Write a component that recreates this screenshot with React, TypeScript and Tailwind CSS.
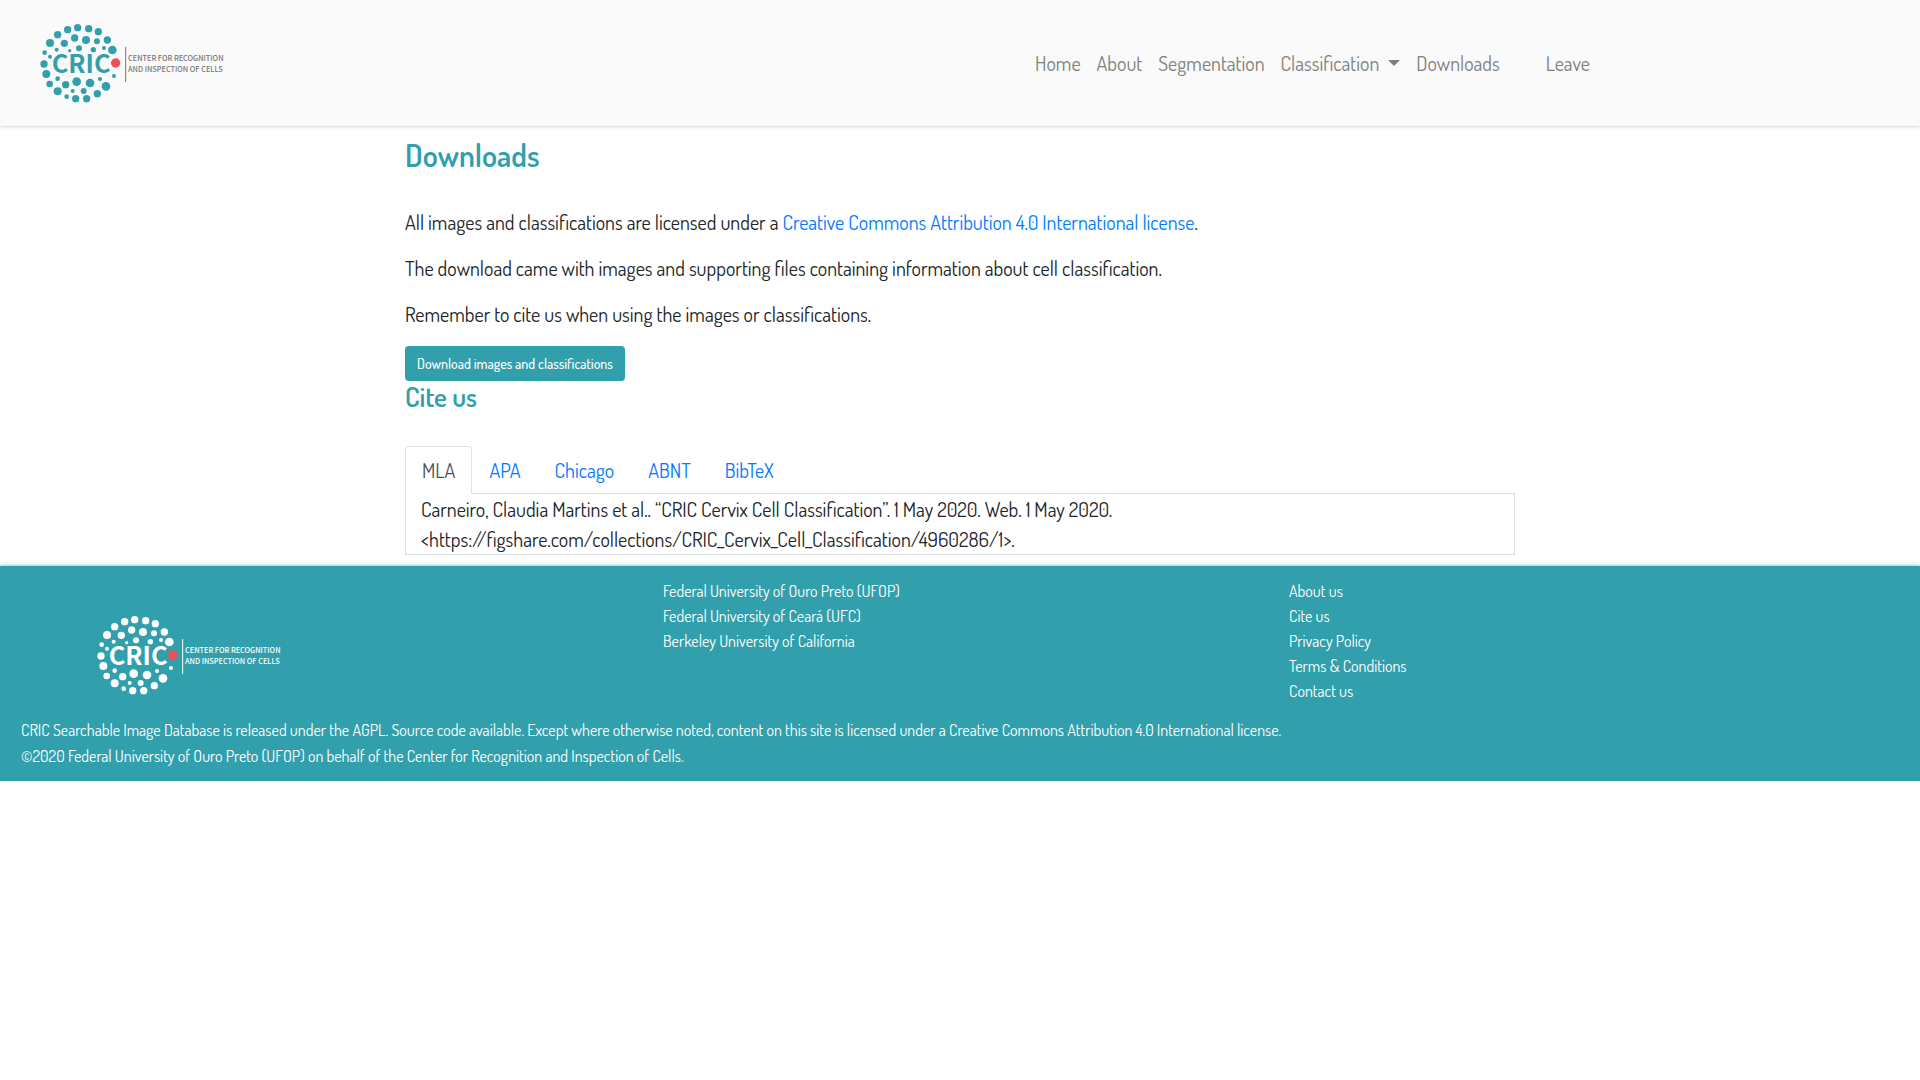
import { useState } from 'react';

// Cell dots around the wordmark: centre x, centre y, radius
const DOTS: [number, number, number][] = [
  [173, 53, 11], [206, 56, 11], [235, 65, 11], [143, 59, 11], [113, 74, 11],
  [90, 99, 12], [133, 100, 11], [164, 84, 11], [198, 90, 12], [231, 94, 9],
  [262, 90, 11], [277, 120, 13], [252, 114, 6], [220, 119, 8], [177, 115, 9],
  [149, 122, 5], [110, 119, 6], [74, 128, 7], [90, 140, 6], [72, 162, 11],
  [79, 192, 12], [89, 222, 10], [113, 206, 7], [137, 224, 11], [170, 215, 13],
  [210, 219, 13], [240, 207, 6], [282, 198, 6], [258, 229, 13], [232, 251, 11],
  [191, 243, 9], [158, 243, 6], [113, 244, 12], [140, 260, 7], [167, 266, 11],
  [200, 266, 11],
];

function Logo({ inverse = false }: { inverse?: boolean }) {
  const cells = inverse ? 'fill-white' : 'fill-[#329fac]';
  const text = inverse ? 'fill-white' : 'fill-[#777777]';
  const rule = inverse ? 'stroke-white' : 'stroke-[#777777]';
  return (
    <svg viewBox="60 39 576 240" className="h-20 w-48" role="img" aria-label="CRIC">
      <g className={cells}>
        {DOTS.map(([x, y, r]) => (
          <circle key={`${x}-${y}`} cx={x} cy={y} r={r} />
        ))}
        <text x="95" y="189" className="font-['Noto_Sans_CJK_SC',sans-serif] text-[76px] font-bold">
          CRIC
        </text>
      </g>
      <circle cx="287" cy="159" r="14" className="fill-[#f04e52]" />
      <line x1="317" x2="317" y1="111" y2="216" strokeWidth="3" className={rule} />
      <g className={`font-['Noto_Sans_CJK_SC',sans-serif] text-[22px] font-medium ${text}`}>
        <text x="324" y="154">CENTER FOR RECOGNITION</text>
        <text x="324" y="185">AND INSPECTION OF CELLS</text>
      </g>
    </svg>
  );
}

const CITATIONS = [
  {
    id: 'MLA',
    lines: [
      'Carneiro, Claudia Martins et al.. “CRIC Cervix Cell Classification”. 1 May 2020. Web. 1 May 2020.',
      '<https://figshare.com/collections/CRIC_Cervix_Cell_Classification/4960286/1>.',
    ],
  },
  { id: 'APA', lines: ['Carneiro, Claudia Martins et al. (2020). CRIC Cervix Cell Classification.'] },
  { id: 'Chicago', lines: ['Carneiro, Claudia Martins et al. “CRIC Cervix Cell Classification”. 2020.'] },
  { id: 'ABNT', lines: ['CARNEIRO, Claudia Martins et al. CRIC Cervix Cell Classification. 2020.'] },
  { id: 'BibTeX', lines: ['@misc{cric2020, title={CRIC Cervix Cell Classification}, year={2020}}'] },
];

function Header() {
  return (
    <header className="relative flex items-center justify-between bg-[#fafafa] py-[23px] pl-10 pr-[322px] shadow-[0_0_4px_rgba(0,0,0,0.25)]">
      <a href="#home">
        <Logo />
      </a>
      <nav aria-label="Main" className="flex items-center text-[#7f7f7f]">
        <a href="#home" className="px-2">Home</a>
        <a href="#about" className="px-2">About</a>
        <a href="#segmentation" className="px-2">Segmentation</a>
        <button type="button" aria-haspopup="menu" className="flex items-center gap-[9px] px-2">
          Classification
          <svg viewBox="0 0 12 6" className="h-1.5 w-3 fill-current" aria-hidden="true">
            <path d="M0 0h12L6 6z" />
          </svg>
        </button>
        <a href="#downloads" className="px-2">Downloads</a>
        <a href="#leave" className="ml-[30px] px-2">Leave</a>
      </nav>
    </header>
  );
}

function CiteTabs() {
  const [active, setActive] = useState('MLA');
  const current = CITATIONS.find((c) => c.id === active)!;
  return (
    <div>
      <div role="tablist" className="flex border-b border-[#dee2e6]">
        {CITATIONS.map(({ id }) => (
          <button
            key={id}
            id={`tab-${id}`}
            type="button"
            role="tab"
            aria-selected={id === active}
            aria-controls="citation"
            onClick={() => setActive(id)}
            className={
              id === active
                ? '-mb-px rounded-t border border-[#dee2e6] border-b-white bg-white px-4 py-2 text-[#495057]'
                : '-mb-px rounded-t border border-transparent px-4 py-2 text-[#007bff]'
            }
          >
            {id}
          </button>
        ))}
      </div>
      <div
        id="citation"
        role="tabpanel"
        aria-labelledby={`tab-${active}`}
        className="border border-t-0 border-[#dee2e6] px-[15px]"
      >
        {current.lines.map((line) => (
          <p key={line}>{line}</p>
        ))}
      </div>
    </div>
  );
}

function Footer() {
  return (
    <footer className="bg-[#329fac] px-[21px] pb-3 pt-[13px] text-base text-white shadow-[0_0_4px_rgba(50,159,172,0.8)]">
      <div className="grid grid-cols-3">
        <div className="pl-[76px] pt-9">
          <Logo inverse />
        </div>
        <ul className="px-4 leading-[25px]">
          <li>Federal University of Ouro Preto (UFOP)</li>
          <li>Federal University of Ceará (UFC)</li>
          <li>Berkeley University of California</li>
        </ul>
        <ul className="px-4 leading-[25px]">
          <li><a href="#about">About us</a></li>
          <li><a href="#cite">Cite us</a></li>
          <li><a href="#privacy">Privacy Policy</a></li>
          <li><a href="#terms">Terms &amp; Conditions</a></li>
          <li><a href="#contact">Contact us</a></li>
        </ul>
      </div>
      <div className="mt-[13px] leading-[26px]">
        <p>
          CRIC Searchable Image Database is released under the AGPL. Source code available. Except where otherwise
          noted, content on this site is licensed under a Creative Commons Attribution 4.0 International license.
        </p>
        <p>©2020 Federal University of Ouro Preto (UFOP) on behalf of the Center for Recognition and Inspection of Cells.</p>
      </div>
    </footer>
  );
}

export default function App() {
  return (
    <div className="bg-white font-['Dosis','Lato',sans-serif] text-xl leading-[30px] font-normal text-[#212529]">
      <Header />
      <main className="mx-auto max-w-[1140px] px-[15px] pb-[11px] pt-[11px]">
        <h1 className="text-[31px] font-semibold leading-9 text-[#329fac]">Downloads</h1>
        <div className="mb-[17px] mt-[34px] flex flex-col gap-4">
          <p>
            All images and classifications are licensed under a{' '}
            <a href="#license" className="text-[#007bff]">
              Creative Commons Attribution 4.0 International license
            </a>
            .
          </p>
          <p>The download came with images and supporting files containing information about cell classification.</p>
          <p>Remember to cite us when using the images or classifications.</p>
        </div>
        <button
          type="button"
          className="block rounded bg-[#329fac] px-3 py-[7px] text-sm font-medium leading-[21px] text-white"
        >
          Download images and classifications
        </button>
        <h2 className="mb-[34px] text-[27px] font-semibold leading-[31px] text-[#329fac]">Cite us</h2>
        <CiteTabs />
      </main>
      <Footer />
    </div>
  );
}
